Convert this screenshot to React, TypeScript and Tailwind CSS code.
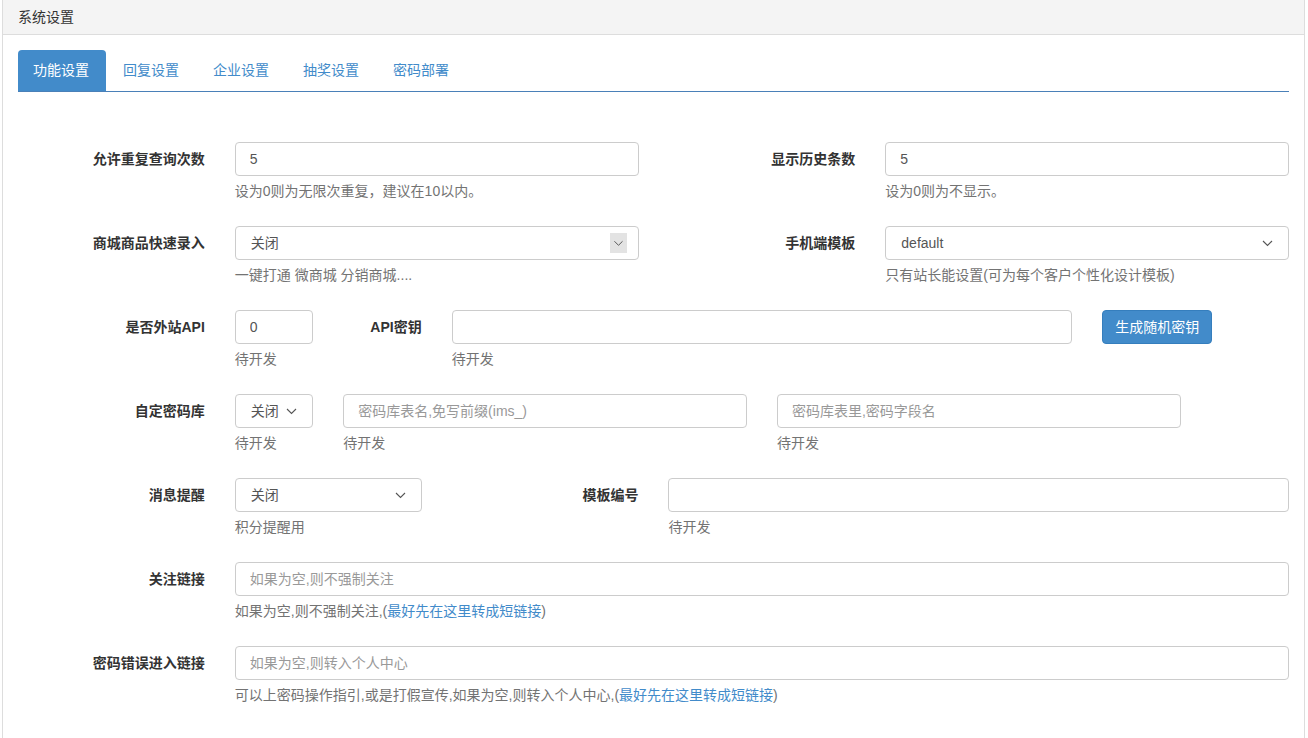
import type { ReactNode } from 'react';

const FONT = '"Liberation Sans", "Noto Sans CJK SC", sans-serif';

const TABS = ['功能设置', '回复设置', '企业设置', '抽奖设置', '密码部署'];

const Chevron = ({ className = '' }: { className?: string }) => (
  <svg width="11" height="7" viewBox="0 0 11 7" className={className}>
    <path d="M1 1l4.5 4.5L10 1" fill="none" stroke="#555" strokeWidth="1.1" />
  </svg>
);

const Label = ({ span, children }: { span: string; children: ReactNode }) => (
  <label className={`${span} px-[15px] pt-[7px] text-right font-bold text-[#333] leading-[20px]`}>{children}</label>
);

const Help = ({ children }: { children: ReactNode }) => (
  <p className="mt-[5px] mb-[10px] leading-[20px] text-[#737373]">{children}</p>
);

const Input = ({ value, placeholder }: { value?: string; placeholder?: string }) => (
  <input
    readOnly
    value={value ?? ''}
    placeholder={placeholder}
    className="block h-[34px] w-full rounded-[4px] border border-[#ccc] bg-white px-[14px] text-[14px] text-[#555] outline-none placeholder:text-[#999]"
    style={{ fontFamily: FONT }}
  />
);

const Select = ({ value, boxed, tight }: { value: string; boxed?: boolean; tight?: boolean }) => (
  <div className="flex h-[34px] w-full items-center rounded-[4px] border border-[#ccc] bg-white pl-[15px] pr-[12px] text-[#555]">
    <span className={tight ? '' : 'flex-1'}>{value}</span>
    {boxed ? (
      <span className="-mr-[1px] flex h-[20px] w-[17px] items-center justify-center bg-[#e3e3e3]">
        <Chevron className="scale-90" />
      </span>
    ) : (
      <Chevron className={tight ? 'ml-[7px]' : 'mr-[3px]'} />
    )}
  </div>
);

const Cell = ({ span, children }: { span: string; children: ReactNode }) => (
  <div className={`${span} px-[15px]`}>{children}</div>
);

const Row = ({ children }: { children: ReactNode }) => (
  <div className="-mx-[15px] mb-[15px] grid grid-cols-12">{children}</div>
);

export default function App() {
  return (
    <div className="min-h-[738px] bg-white pl-[2px] pr-[3px] text-[14px]" style={{ fontFamily: FONT }}>
      <div className="min-h-[738px] border-x border-[#ddd]">
        {/* header */}
        <div className="flex h-[35px] items-center border-b border-[#ddd] bg-[#f4f4f4] px-[15px] text-[#333]">
          系统设置
        </div>

        <div className="px-[15px] pt-[15px]">
          {/* tabs */}
          <div className="flex border-b border-[#4a80b8]">
            {TABS.map((t, i) => (
              <div
                key={t}
                className={`mr-[2px] flex h-[41px] w-[88px] items-center rounded-t-[4px] px-[15px] ${
                  i === 0 ? 'bg-[#428bca] text-white' : 'text-[#428bca]'
                }`}
              >
                {t}
              </div>
            ))}
          </div>

          <div className="pt-[50px]">
            <Row>
              <Label span="col-span-2">允许重复查询次数</Label>
              <Cell span="col-span-4">
                <Input value="5" />
                <Help>设为0则为无限次重复，建议在10以内。</Help>
              </Cell>
              <Label span="col-span-2">显示历史条数</Label>
              <Cell span="col-span-4">
                <Input value="5" />
                <Help>设为0则为不显示。</Help>
              </Cell>
            </Row>

            <Row>
              <Label span="col-span-2">商城商品快速录入</Label>
              <Cell span="col-span-4">
                <Select value="关闭" boxed />
                <Help>一键打通 微商城 分销商城....</Help>
              </Cell>
              <Label span="col-span-2">手机端模板</Label>
              <Cell span="col-span-4">
                <Select value="default" />
                <Help>只有站长能设置(可为每个客户个性化设计模板)</Help>
              </Cell>
            </Row>

            <Row>
              <Label span="col-span-2">是否外站API</Label>
              <Cell span="col-span-1">
                <Input value="0" />
                <Help>待开发</Help>
              </Cell>
              <Label span="col-span-1">API密钥</Label>
              <Cell span="col-span-6">
                <Input />
                <Help>待开发</Help>
              </Cell>
              <Cell span="col-span-2">
                <button className="h-[34px] rounded-[4px] border border-[#357ebd] bg-[#428bca] px-[12px] text-white">
                  生成随机密钥
                </button>
              </Cell>
            </Row>

            <Row>
              <Label span="col-span-2">自定密码库</Label>
              <Cell span="col-span-1">
                <Select value="关闭" tight />
                <Help>待开发</Help>
              </Cell>
              <Cell span="col-span-4">
                <Input placeholder="密码库表名,免写前缀(ims_)" />
                <Help>待开发</Help>
              </Cell>
              <Cell span="col-span-4">
                <Input placeholder="密码库表里,密码字段名" />
                <Help>待开发</Help>
              </Cell>
            </Row>

            <Row>
              <Label span="col-span-2">消息提醒</Label>
              <Cell span="col-span-2">
                <Select value="关闭" />
                <Help>积分提醒用</Help>
              </Cell>
              <Label span="col-span-2">模板编号</Label>
              <Cell span="col-span-6">
                <Input />
                <Help>待开发</Help>
              </Cell>
            </Row>

            <Row>
              <Label span="col-span-2">关注链接</Label>
              <Cell span="col-span-10">
                <Input placeholder="如果为空,则不强制关注" />
                <Help>
                  如果为空,则不强制关注,(<a className="text-[#428bca]">最好先在这里转成短链接</a>)
                </Help>
              </Cell>
            </Row>

            <Row>
              <Label span="col-span-2">密码错误进入链接</Label>
              <Cell span="col-span-10">
                <Input placeholder="如果为空,则转入个人中心" />
                <Help>
                  可以上密码操作指引,或是打假宣传,如果为空,则转入个人中心,(
                  <a className="text-[#428bca]">最好先在这里转成短链接</a>)
                </Help>
              </Cell>
            </Row>
          </div>
        </div>
      </div>
    </div>
  );
}
